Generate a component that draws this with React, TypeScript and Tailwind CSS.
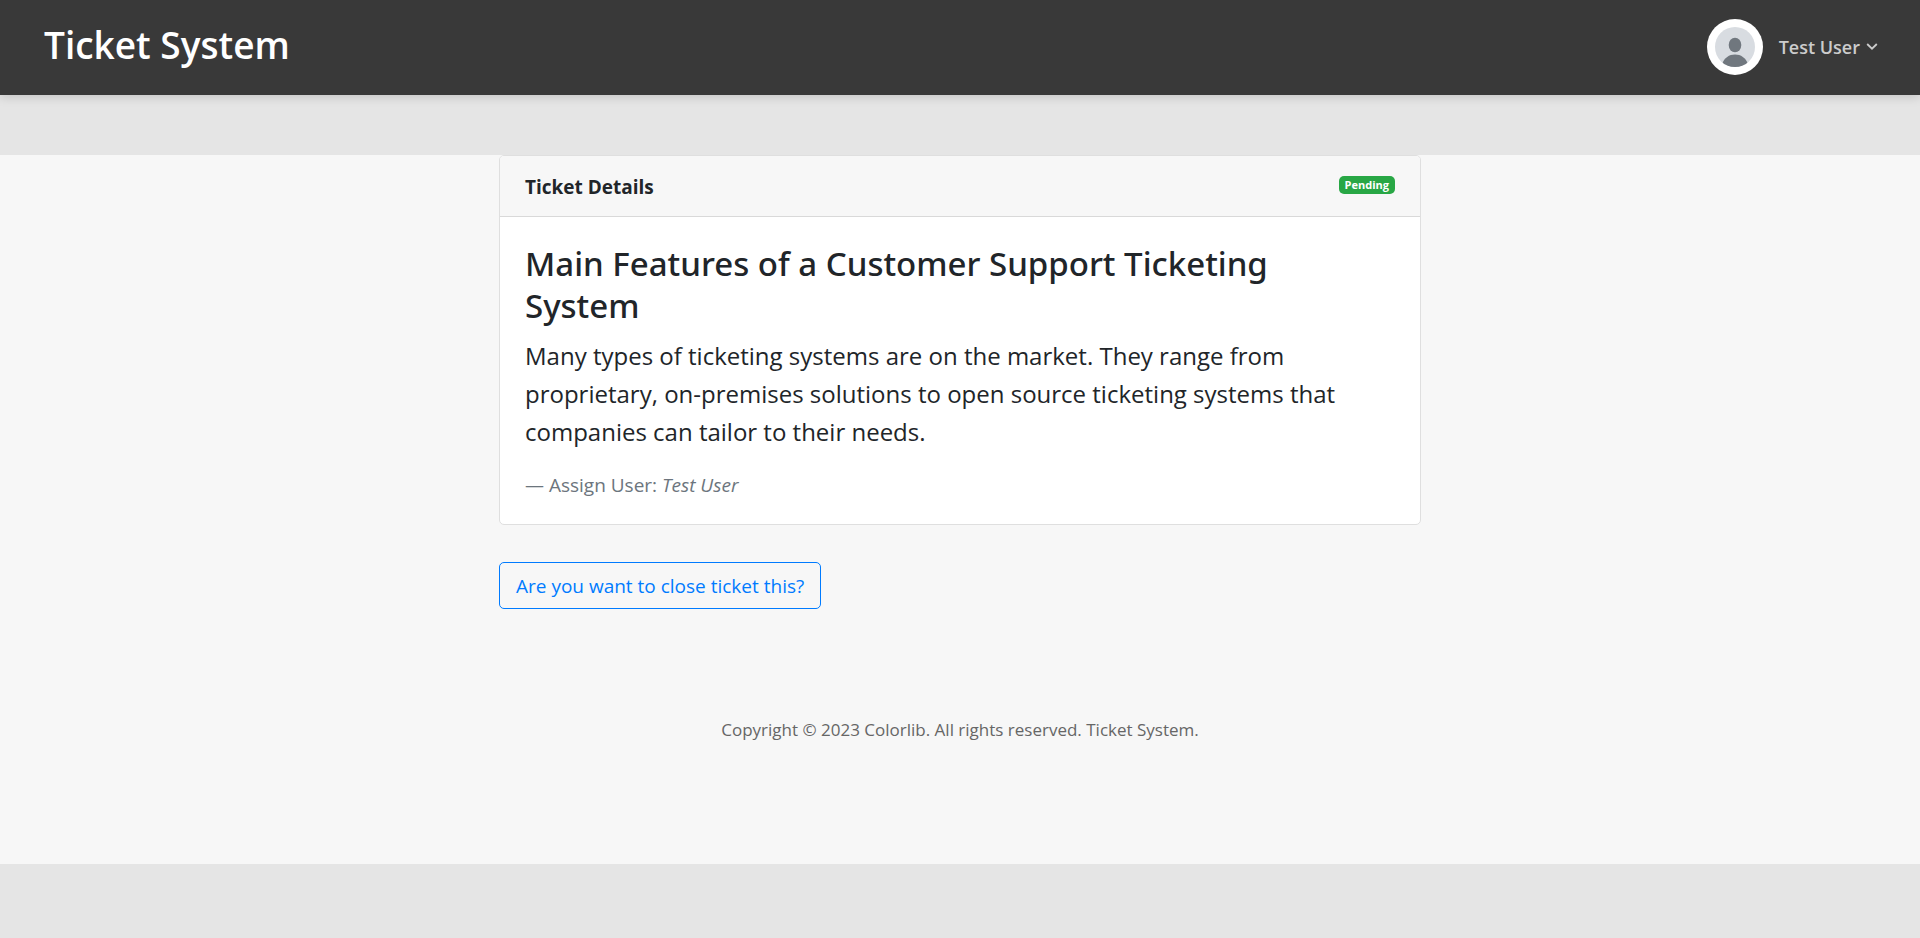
function Avatar() {
  return (
    <span className="flex size-14 items-center justify-center rounded-full bg-white">
      <svg viewBox="0 0 40 40" className="size-10" aria-hidden="true">
        <defs>
          <clipPath id="avatar-clip">
            <circle cx="20" cy="20" r="20" />
          </clipPath>
        </defs>
        <g clipPath="url(#avatar-clip)">
          <rect width="40" height="40" fill="#d8dce1" />
          <ellipse cx="20" cy="18" rx="6.3" ry="7.3" fill="#70777e" />
          <path d="M7 37C9.5 30.800 14 27.600 20 27.600S30.500 30.800 33 37V41H7Z" fill="#70777e" />
        </g>
      </svg>
    </span>
  );
}

function Header() {
  return (
    <header className="relative flex h-[95px] items-center justify-between bg-[#393939] px-11 shadow-[0_2px_10px_rgba(0,0,0,0.15)]">
      <a href="#" className="pb-1.5 text-[37px] leading-12 font-semibold text-white">
        Ticket System
      </a>
      <button type="button" className="-mr-0.5 flex items-center gap-4 pb-0.5 text-[#cccccc]">
        <Avatar />
        <span className="flex items-center gap-1.5 text-[18px] leading-7 font-semibold">
          Test User
          <svg viewBox="0 0 12 8" className="h-2 w-3" fill="none" stroke="currentColor" strokeWidth="1.8" aria-hidden="true">
            <path d="M1.200 1 6 5.700 10.800 1" />
          </svg>
        </span>
      </button>
    </header>
  );
}

function TicketCard() {
  return (
    <article className="rounded-[5px] border border-[#dfdfdf] bg-white">
      <div className="flex h-[61px] items-start justify-between rounded-t-[4px] border-b border-[#d9d9d9] bg-[#f7f7f7] px-[25px] pt-4">
        <h2 className="text-[19px] leading-[30px] font-bold">Ticket Details</h2>
        <span className="mt-1 rounded-[5px] bg-[#28a745] px-1.5 text-[11px] leading-[18px] font-bold text-white">
          Pending
        </span>
      </div>
      <div className="px-[25px] pt-[26px] pb-6">
        <h1 className="mb-2.5 pr-12 font-['Noto_Sans','Open_Sans',sans-serif] text-[33px] leading-[42px] font-medium">
          Main Features of a Customer Support Ticketing System
        </h1>
        <p className="mb-[19px] text-[24px] leading-[38px]">
          Many types of ticketing systems are on the market. They range from proprietary, on-premises solutions to
          open source ticketing systems that companies can tailor to their needs.
        </p>
        <p className="text-[19px] leading-[30px] text-[#6c757d]">
          — Assign User: <cite>Test User</cite>
        </p>
      </div>
    </article>
  );
}

export default function App() {
  return (
    <div className="min-h-screen bg-[#e5e5e5] font-['Open_Sans','Noto_Sans',sans-serif] text-[#212529]">
      <Header />
      <main className="mt-[60px] bg-[#f7f7f7] pb-[118px]">
        <div className="mx-auto max-w-[922px]">
          <TicketCard />
          <button
            type="button"
            className="mt-[37px] h-[47px] rounded-[5px] border border-[#007bff] px-4 text-[19px] leading-[30px] text-[#007bff]"
          >
            Are you want to close ticket this?
          </button>
          <footer className="mt-[105px] text-center text-[17px] leading-8 text-[#666666]">
            Copyright © 2023 Colorlib. All rights reserved. Ticket System.
          </footer>
        </div>
      </main>
    </div>
  );
}
